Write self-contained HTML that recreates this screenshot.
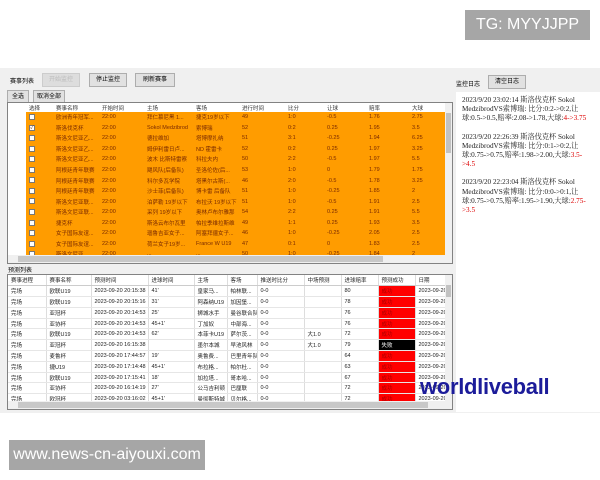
<!DOCTYPE html>
<html><head><meta charset="utf-8"><style>
*{margin:0;padding:0;box-sizing:border-box}
body{width:600px;height:480px;position:relative;background:#fff;font-family:"Liberation Sans","Noto Sans CJK SC",sans-serif;overflow:hidden}
.a{position:absolute}
.app{left:0;top:68px;width:600px;height:345px;background:#f0f0f0}
.btn{position:absolute;height:14px;border:1px solid #adadad;background:#e1e1e1;font-size:6px;line-height:12px;text-align:center;color:#000}
.lbl{position:absolute;font-size:6px;color:#000}
table{border-collapse:collapse;table-layout:fixed;font-size:5.5px;font-family:"Liberation Sans","Noto Sans CJK SC",sans-serif}
td{white-space:nowrap;overflow:hidden;padding-left:3px}
.t1{position:absolute;left:7px;top:102px;width:446px;height:162px;border:1px solid #828282;background:#fff;overflow:hidden}
.t1 tr{height:10.55px}
.t1 tr.h{height:9px;background:#fff;color:#333}
.t1 tr.o td{background:#ff9c00;color:#7a2a00}
.t1 td.rh{background:#fff!important}
.cb{display:inline-block;width:6px;height:6px;border:1px solid #777;background:#fff;font-size:5px;line-height:5px;text-align:center;vertical-align:middle}
.t2{position:absolute;left:7px;top:274px;width:446px;height:136px;border:1px solid #828282;background:#fff;overflow:hidden}
.t2 tr{height:10.8px}
.t2 td{border-right:1px solid #ddd;border-bottom:1px solid #e6e6e6;color:#222}
.t2 tr.h td{border-bottom:1px solid #ccc}
.red{background:#f00!important;color:#a00!important}
.blk{background:#000!important;color:#fff!important}
.vs{position:absolute;right:0;top:0;width:7px;bottom:8px;background:#f0f0f0}
.hs{position:absolute;left:0;right:0;bottom:0;height:8px;background:#f0f0f0}
.log{position:absolute;left:456px;top:92px;width:144px;height:320px;background:#fff;font-family:"Liberation Serif","Noto Serif CJK SC",serif;font-size:7.2px;line-height:9.2px;color:#222;padding:4px 8px 0 6px}
.log p{margin-bottom:9px}
.r{color:#d00}
</style></head><body>
<div class="a" style="left:465px;top:10px;width:125px;height:30px;background:#a6a6a6;color:#fff;font-size:16px;line-height:30px;text-align:center">TG: MYYJJPP</div>
<div class="a app"></div>
<div class="lbl" style="left:10px;top:76px">赛事列表</div>
<div class="btn" style="left:42px;top:73px;width:38px;color:#bbb;border-color:#ccc;background:#ddd">开始监控</div>
<div class="btn" style="left:89px;top:73px;width:38px">停止监控</div>
<div class="btn" style="left:135px;top:73px;width:40px">刷新赛事</div>
<div class="btn" style="left:7px;top:90px;width:22px">全选</div>
<div class="btn" style="left:33px;top:90px;width:32px">取消全部</div>
<div class="lbl" style="left:456px;top:79px">监控日志</div>
<div class="btn" style="left:488px;top:75px;width:38px">清空日志</div>

<div class="t1"><table style="width:438px">
<colgroup><col style="width:18px"><col style="width:27px"><col style="width:46px"><col style="width:45px"><col style="width:49px"><col style="width:46px"><col style="width:46px"><col style="width:39px"><col style="width:42px"><col style="width:43px"><col style="width:37px"></colgroup>
<tr class="h"><td></td><td>选择</td><td>赛事名称</td><td>开始时间</td><td>主场</td><td>客场</td><td>进行时间</td><td>比分</td><td>让球</td><td>赔率</td><td>大球</td></tr>
<tr class="o"><td class="rh"></td><td><span class="cb"></span></td><td>欧洲青年冠军...</td><td>22:00</td><td>拜仁慕尼黑 1...</td><td>捷克19岁以下</td><td>49</td><td>1:0</td><td>-0.5</td><td>1.76</td><td>2.75</td></tr>
<tr class="o"><td class="rh"></td><td><span class="cb">✓</span></td><td>斯洛伐克杯</td><td>22:00</td><td>Sokol Medzibrod</td><td>索博瑞</td><td>52</td><td>0:2</td><td>0.25</td><td>1.95</td><td>3.5</td></tr>
<tr class="o"><td class="rh"></td><td><span class="cb"></span></td><td>斯洛文尼亚乙...</td><td>22:00</td><td>德拉维加</td><td>塔博摩扎纳</td><td>51</td><td>3:1</td><td>-0.25</td><td>1.94</td><td>6.25</td></tr>
<tr class="o"><td class="rh"></td><td><span class="cb"></span></td><td>斯洛文尼亚乙...</td><td>22:00</td><td>姆伊利雷日卢...</td><td>ND 霍雷卡</td><td>52</td><td>0:2</td><td>0.25</td><td>1.97</td><td>3.25</td></tr>
<tr class="o"><td class="rh"></td><td><span class="cb"></span></td><td>斯洛文尼亚乙...</td><td>22:00</td><td>波木 比斯特雷察</td><td>科拉夫内</td><td>50</td><td>2:2</td><td>-0.5</td><td>1.97</td><td>5.5</td></tr>
<tr class="o"><td class="rh"></td><td><span class="cb"></span></td><td>阿根廷青年联赛</td><td>22:00</td><td>飓风队(后备队)</td><td>圣洛伦佐(后...</td><td>53</td><td>1:0</td><td>0</td><td>1.79</td><td>1.75</td></tr>
<tr class="o"><td class="rh"></td><td><span class="cb"></span></td><td>阿根廷青年联赛</td><td>22:00</td><td>科尔多瓦学院</td><td>塔黑尔古斯(...</td><td>46</td><td>2:0</td><td>-0.5</td><td>1.78</td><td>3.25</td></tr>
<tr class="o"><td class="rh"></td><td><span class="cb"></span></td><td>阿根廷青年联赛</td><td>22:00</td><td>沙士菲(后备队)</td><td>博卡雷 后备队</td><td>51</td><td>1:0</td><td>-0.25</td><td>1.85</td><td>2</td></tr>
<tr class="o"><td class="rh"></td><td><span class="cb"></span></td><td>斯洛文尼亚联...</td><td>22:00</td><td>泊萨勒 19岁以下</td><td>布拉沃 19岁以下</td><td>51</td><td>1:0</td><td>-0.5</td><td>1.91</td><td>2.5</td></tr>
<tr class="o"><td class="rh"></td><td><span class="cb"></span></td><td>斯洛文尼亚联...</td><td>22:00</td><td>采列 19岁以下</td><td>奥林卢布尔雅那</td><td>54</td><td>2:2</td><td>0.25</td><td>1.91</td><td>5.5</td></tr>
<tr class="o"><td class="rh"></td><td><span class="cb"></span></td><td>捷克杯</td><td>22:00</td><td>斯洛云布尔瓦里</td><td>帕拉季维拉斯维</td><td>49</td><td>1:1</td><td>0.25</td><td>1.93</td><td>3.5</td></tr>
<tr class="o"><td class="rh"></td><td><span class="cb"></span></td><td>女子国际友谊...</td><td>22:00</td><td>瑙鲁吉亚女子...</td><td>阿塞拜疆女子...</td><td>46</td><td>1:0</td><td>-0.25</td><td>2.05</td><td>2.5</td></tr>
<tr class="o"><td class="rh"></td><td><span class="cb"></span></td><td>女子国际友谊...</td><td>22:00</td><td>荷兰女子19岁...</td><td>France W U19</td><td>47</td><td>0:1</td><td>0</td><td>1.83</td><td>2.5</td></tr>
<tr class="o"><td class="rh"></td><td><span class="cb"></span></td><td>斯洛文尼亚...</td><td>22:00</td><td>...</td><td>...</td><td>50</td><td>1:0</td><td>-0.25</td><td>1.84</td><td>2</td></tr>
</table>
<div class="vs"><div style="margin:10px 1px 0;height:40px;background:#c2c2c2"></div></div>
<div class="hs"><div style="margin:1px 0 0 10px;width:365px;height:6px;background:#c8c8c8"></div></div>
</div>

<div class="lbl" style="left:8px;top:265px">预测列表</div>
<div class="t2"><table style="width:438px">
<colgroup><col style="width:38px"><col style="width:45px"><col style="width:57px"><col style="width:46px"><col style="width:33px"><col style="width:30px"><col style="width:47px"><col style="width:37px"><col style="width:37px"><col style="width:37px"><col style="width:31px"></colgroup>
<tr class="h"><td>赛事进程</td><td>赛事名称</td><td>预测时间</td><td>进球时间</td><td>主场</td><td>客场</td><td>推送时比分</td><td>中场预测</td><td>进球赔率</td><td>预测成功</td><td>日期</td></tr>
<tr><td>完场</td><td>欧联U19</td><td>2023-09-20 20:15:38</td><td>41'</td><td>皇家马...</td><td>帕林联...</td><td>0-0</td><td></td><td>80</td><td class="red">成功</td><td>2023-09-20</td></tr>
<tr><td>完场</td><td>欧联U19</td><td>2023-09-20 20:15:16</td><td>31'</td><td>阿森纳U19</td><td>加因堡...</td><td>0-0</td><td></td><td>78</td><td class="red">成功</td><td>2023-09-20</td></tr>
<tr><td>完场</td><td>亚冠杯</td><td>2023-09-20 20:14:53</td><td>25'</td><td>狮城水手</td><td>曼谷联合队</td><td>0-0</td><td></td><td>76</td><td class="red">成功</td><td>2023-09-20</td></tr>
<tr><td>完场</td><td>亚协杯</td><td>2023-09-20 20:14:53</td><td>45+1'</td><td>丁加奴</td><td>中部海...</td><td>0-0</td><td></td><td>76</td><td class="red">成功</td><td>2023-09-20</td></tr>
<tr><td>完场</td><td>欧联U19</td><td>2023-09-20 20:14:53</td><td>62'</td><td>本菲卡U19</td><td>萨尔茨...</td><td>0-0</td><td>大1.0</td><td>72</td><td class="red">成功</td><td>2023-09-20</td></tr>
<tr><td>完场</td><td>亚冠杯</td><td>2023-09-20 16:15:38</td><td></td><td>墨尔本城</td><td>早池风林</td><td>0-0</td><td>大1.0</td><td>79</td><td class="blk">失败</td><td>2023-09-20</td></tr>
<tr><td>完场</td><td>麦鲁杯</td><td>2023-09-20 17:44:57</td><td>19'</td><td>奥鲁费...</td><td>巴里青年队</td><td>0-0</td><td></td><td>64</td><td class="red">成功</td><td>2023-09-20</td></tr>
<tr><td>完场</td><td>捷U19</td><td>2023-09-20 17:14:48</td><td>45+1'</td><td>布拉格...</td><td>帕尔杜...</td><td>0-0</td><td></td><td>63</td><td class="red">成功</td><td>2023-09-20</td></tr>
<tr><td>完场</td><td>欧联U19</td><td>2023-09-20 17:15:41</td><td>18'</td><td>加拉塔...</td><td>哥本哈...</td><td>0-0</td><td></td><td>67</td><td class="red">成功</td><td>2023-09-20</td></tr>
<tr><td>完场</td><td>亚协杯</td><td>2023-09-20 16:14:19</td><td>27'</td><td>公马吉利顿</td><td>巴厘联</td><td>0-0</td><td></td><td>72</td><td class="red">成功</td><td>2023-09-20</td></tr>
<tr><td>完场</td><td>欧冠杯</td><td>2023-09-20 03:16:02</td><td>45+1'</td><td>曼彻斯特城</td><td>贝尔格...</td><td>0-0</td><td></td><td>72</td><td class="red">成功</td><td>2023-09-20</td></tr>
</table>
<div class="vs"><div style="margin:10px 1px 0;height:12px;background:#c2c2c2"></div></div>
<div class="hs"><div style="margin:1px 0 0 10px;width:410px;height:6px;background:#c8c8c8"></div></div>
</div>

<div class="log">
<p>2023/9/20 23:02:14 斯洛伐克杯 Sokol Medzibrod<span>VS</span>索博瑞: 比分:0:2-&gt;0:2,让球:0.5-&gt;0.5,赔率:2.08-&gt;1.78,大球:<span class="r">4-&gt;3.75</span></p>
<p>2023/9/20 22:26:39 斯洛伐克杯 Sokol Medzibrod<span>VS</span>索博瑞: 比分:0:1-&gt;0:2,让球:0.75-&gt;0.75,赔率:1.98-&gt;2.00,大球:<span class="r">3.5-&gt;4.5</span></p>
<p>2023/9/20 22:23:04 斯洛伐克杯 Sokol Medzibrod<span>VS</span>索博瑞: 比分:0:0-&gt;0:1,让球:0.75-&gt;0.75,赔率:1.95-&gt;1.90,大球:<span class="r">2.75-&gt;3.5</span></p>
</div>
<div class="a" style="left:420px;top:374px;font-size:22px;font-weight:bold;color:#1c1c9a;letter-spacing:-0.3px">worldliveball</div>
<div class="a" style="left:9px;top:440px;width:196px;height:30px;background:#a6a6a6;color:#fff;font-size:16px;line-height:30px;text-align:center">www.news-cn-aiyouxi.com</div>
</body></html>
